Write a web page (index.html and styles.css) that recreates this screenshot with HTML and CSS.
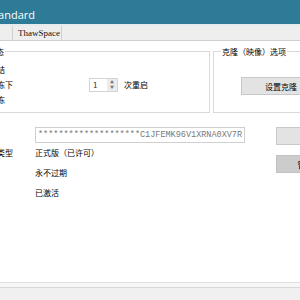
FILE: index.html
```html
<!DOCTYPE html>
<html lang="zh-CN">
<head>
  <meta charset="UTF-8" />
  <title>ThawSpace Standard</title>
  <link rel="stylesheet" href="styles.css">
</head>
<body>
  <div class="titlebar">
    <div class="title-text">ThawSpace Standard</div>
  </div>

  <div class="tabs">
    <div class="tab tab-first">常规</div>
    <div class="tab tab-main">ThawSpace</div>
  </div>

  <div class="page">
    <div class="groups">
      <fieldset class="group status">
        <legend>系统保护状态</legend>
        <label class="option"><input type="radio" name="mode" checked><span class="option-text">启动冻结</span></label>
        <label class="option"><input type="radio" name="mode"><span class="option-text">启动解冻下</span>
          <span class="spin"><span class="spin-value">1</span><span class="spin-arrows"><span>▲</span><span>▼</span></span></span>
          <span class="spin-unit">次重启</span>
        </label>
        <label class="option"><input type="radio" name="mode"><span class="option-text">启动解冻</span></label>
      </fieldset>
      <fieldset class="group clone">
        <legend>克隆（映像）选项</legend>
        <button class="btn clone-btn">设置克隆</button>
      </fieldset>
    </div>

    <div class="license">
      <div class="info">
        <div class="label">序列号</div>
        <input class="serial" value="********************C1JFEMK96V1XRNA0XV7R" readonly>
        <div class="label">许可证类型</div>
        <div class="value">正式版（已许可）</div>
        <div class="label">有效期</div>
        <div class="value">永不过期</div>
        <div class="label">状态</div>
        <div class="value">已激活</div>
      </div>
      <div class="actions">
        <button class="btn">注册</button>
        <button class="btn btn-dark">管理许可</button>
      </div>
    </div>
  </div>

  <div class="statusbar"><div class="statusbar-inner"></div></div>
</body>
</html>
```

FILE: styles.css
```css
html, body {
  margin: 0;
  width: 300px;
  height: 300px;
  overflow: hidden;
}
body {
  font-family: "Noto Sans CJK SC", sans-serif;
  font-size: 8px;
  color: #000;
  background: #fff;
  display: flex;
  flex-direction: column;
}

.titlebar {
  height: 24px;
  flex: none;
  background: #2d7b96;
  border-bottom: 2px solid #e6ecee;
  display: flex;
  align-items: center;
}
.title-text {
  width: 35px;
  flex: none;
  display: flex;
  justify-content: flex-end;
  white-space: nowrap;
  font-family: "Open Sans", sans-serif;
  font-size: 11px;
  color: #fff;
  padding-top: 5px;
}

.tabs {
  height: 14px;
  flex: none;
  display: flex;
  background: #eeeeee;
  border-bottom: 1px solid #cfcfcf;
}
.tab {
  flex: none;
  border-right: 1px solid #cfcfcf;
  line-height: 14px;
  text-align: center;
}
.tab-first {
  width: 60px;
  margin-left: -48px;
}
.tab-main {
  width: 49px;
  padding-left: 4px;
  box-sizing: border-box;
  font-family: "Liberation Serif", serif;
  font-size: 9px;
  color: #111;
}

.page {
  flex: 1;
}

.groups {
  display: flex;
  margin-top: 5px;
}
.group {
  flex: none;
  box-sizing: border-box;
  height: 67px;
  margin: 0;
  padding: 0 7px;
  min-width: 0;
  border: 1px solid #d9d9d9;
}
.group legend {
  padding: 0 1px;
  line-height: 11px;
}
.status {
  width: 263px;
  margin-left: -53px;
}
.clone {
  width: 110px;
  margin-left: 3px;
}

.option {
  display: flex;
  align-items: center;
  height: 15px;
}
.option:first-of-type {
  margin-top: 5px;
}
.option input {
  width: 10px;
  height: 10px;
  margin: 0 4px 0 4px;
}
.option-text {
  width: 116px;
  flex: none;
}
.spin {
  display: flex;
  height: 14px;
  box-sizing: border-box;
  border: 1px solid #d4d4d4;
}
.spin-value {
  width: 14px;
  padding-left: 3px;
  background: #fff;
  line-height: 12px;
  color: #333;
}
.spin-arrows {
  width: 10px;
  background: #ececec;
  display: flex;
  flex-direction: column;
  align-items: center;
  justify-content: center;
  font-size: 4px;
  line-height: 5px;
  color: #777;
}
.spin-unit {
  margin-left: 6px;
}

.btn {
  flex: none;
  width: 75px;
  height: 18px;
  padding: 0;
  background: #e3e3e3;
  border: 1px solid #c8c8c8;
  font-family: "Noto Sans CJK SC", sans-serif;
  font-size: 8px;
  color: #000;
  white-space: nowrap;
}
.clone-btn {
  width: 80px;
  margin: 20px 0 0 20px;
}
.btn-dark {
  background: #cccccc;
  border-color: #c2c2c2;
}

.license {
  display: flex;
  margin-top: 14px;
}
.info {
  flex: none;
  display: grid;
  grid-template-columns: 62px 210px;
  grid-template-rows: 15px repeat(3, 20px);
  align-items: center;
  margin-left: -27px;
}
.label {
  white-space: nowrap;
}
.serial {
  align-self: start;
  width: 210px;
  height: 16px;
  box-sizing: border-box;
  border: 1px solid #cfcfcf;
  padding: 0 2px;
  font-family: "Liberation Mono", monospace;
  font-size: 8.5px;
  color: #7a7a7a;
  outline: none;
}
.actions {
  flex: none;
  display: flex;
  flex-direction: column;
  gap: 10px;
  margin-left: 31px;
}

.statusbar {
  flex: none;
  height: 18px;
  box-sizing: border-box;
  border-top: 1px solid #e0e0e0;
  background: #f7f7f7;
  padding-top: 4px;
}
.statusbar-inner {
  height: 12px;
  border-top: 1px solid #d8d8d8;
  background: #f0f0f0;
}
```
